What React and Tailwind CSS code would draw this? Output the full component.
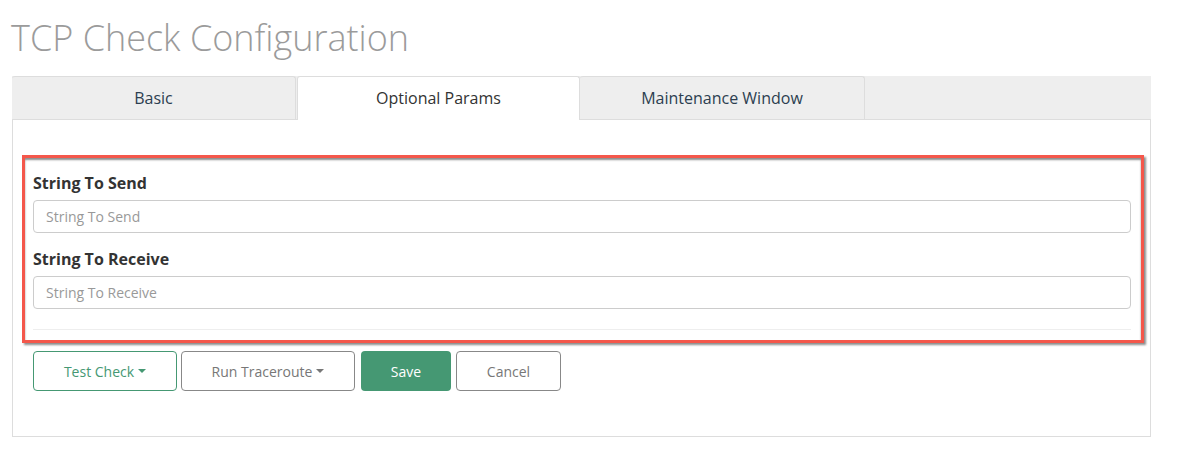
import { useState } from "react";

const font = { fontFamily: '"Open Sans", "Liberation Sans", sans-serif' };

function Caret() {
  return <span className="inline-block ml-[4px] align-middle border-t-[4px] border-x-[4px] border-x-transparent border-t-current" />;
}

export default function App() {
  const [tab, setTab] = useState("optional");
  const tabs = [
    { id: "basic", label: "Basic", w: "w-[284px]" },
    { id: "optional", label: "Optional Params", w: "w-[283px] ml-[1px]" },
    { id: "maint", label: "Maintenance Window", w: "w-[285px]" },
  ];

  return (
    <div className="w-[1190px] h-[454px] bg-white pl-[12px]" style={font}>
      <h1 className="pt-[18px] leading-[40px] text-[36px] font-light text-[#9b9b9b] -ml-[1px]">
        TCP Check Configuration
      </h1>

      <div className="mt-[18px] w-[1139px]">
        {/* tabs */}
        <div className="flex h-[44px] bg-[#eee] border-b border-[#ddd]">
          {tabs.map((t) => {
            const active = t.id === tab;
            return (
              <button
                key={t.id}
                onClick={() => setTab(t.id)}
                className={
                  t.w +
                  (active
                    ? " bg-white text-[#333] h-[44px] border border-b-0 border-[#ddd] rounded-t-[3px]"
                    : " bg-[#eee] text-[#2c3e50] h-[43px] border-t border-r border-[#ddd] rounded-t-[3px]") +
                  " text-[16px] leading-[20px] pb-[1px] flex items-center justify-center"
                }
              >
                {t.label}
              </button>
            );
          })}
        </div>

        {/* panel */}
        <div className="h-[317px] border border-t-0 border-[#ddd] pl-[9px] pr-[6px] pt-[35px]">
          <div className="border-[3px] border-[#f4574b] shadow-[2px_2px_2px_rgba(0,0,0,0.45),inset_0_2px_2px_rgba(0,0,0,0.45)] pl-[8px] pr-[10px] pt-[15px] pb-[10px]">
            <label className="block text-[16px] font-bold text-[#333] leading-[20px] mb-[7px]">String To Send</label>
            <input
              type="text"
              placeholder="String To Send"
              className="block w-full h-[33px] border border-[#ccc] rounded-[4px] px-[12px] text-[14px] text-[#555] placeholder:text-[#999] outline-none"
            />
            <label className="block text-[16px] font-bold text-[#333] leading-[20px] mt-[16px] mb-[7px]">String To Receive</label>
            <input
              type="text"
              placeholder="String To Receive"
              className="block w-full h-[33px] border border-[#ccc] rounded-[4px] px-[12px] text-[14px] text-[#555] placeholder:text-[#999] outline-none"
            />
            <div className="mt-[20px] border-t border-[#eee]" />
          </div>

          <div className="flex pl-[11px] mt-[8px] text-[14px]">
            <button className="w-[144px] h-[40px] border border-[#459873] text-[#459873] rounded-[4px] flex items-center justify-center">
              Test Check<Caret />
            </button>
            <button className="ml-[4px] w-[174px] h-[40px] border border-[#888] text-[#777] rounded-[4px] flex items-center justify-center">
              Run Traceroute<Caret />
            </button>
            <button className="ml-[6px] w-[90px] h-[40px] bg-[#459873] text-white rounded-[4px] flex items-center justify-center">
              Save
            </button>
            <button className="ml-[5px] w-[105px] h-[40px] border border-[#888] text-[#777] rounded-[4px] flex items-center justify-center">
              Cancel
            </button>
          </div>
        </div>
      </div>
    </div>
  );
}
